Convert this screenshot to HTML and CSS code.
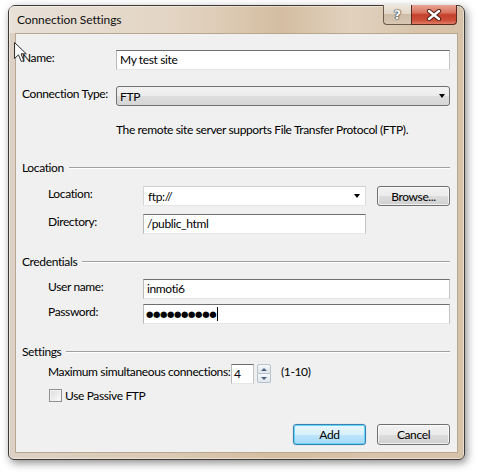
FILE: index.html
```html
<!DOCTYPE html>
<html>
<head>
<meta charset="utf-8">
<link rel="stylesheet" href="styles.css">
</head>
<body>
<div class="window">
  <div class="titlebar">
    <span class="title">Connection Settings</span>
    <div class="caption-btns">
      <div class="cap-help">?</div>
      <div class="cap-close">
        <svg width="16" height="12" viewBox="0 0 16 12"><path d="M3 2 L13 10 M13 2 L3 10" stroke="#4a1a12" stroke-width="4.2" stroke-linecap="round"/><path d="M3 2 L13 10 M13 2 L3 10" stroke="#ffffff" stroke-width="2.4" stroke-linecap="round"/></svg>
      </div>
    </div>
  </div>
  <div class="client">
    <div class="row top-row first">
      <span class="lbl lbl-top">Name:</span>
      <div class="textbox grow">My test site</div>
    </div>
    <div class="row top-row gap16">
      <span class="lbl lbl-top">Connection Type:</span>
      <div class="dropdown grow"><span>FTP</span><span class="arrow"></span></div>
    </div>
    <p class="desc">The remote site server supports File Transfer Protocol (FTP).</p>

    <div class="group-head g-loc"><span>Location</span><span class="rule"></span></div>
    <div class="row grp-row loc-row">
      <span class="lbl lbl-grp">Location:</span>
      <div class="combo"><span>ftp://</span><span class="arrow"></span></div>
      <div class="button browse">Browse...</div>
    </div>
    <div class="row grp-row dir-row">
      <span class="lbl lbl-grp">Directory:</span>
      <div class="textbox dir">/public_html</div>
    </div>

    <div class="group-head g-cred"><span>Credentials</span><span class="rule"></span></div>
    <div class="row grp-row user-row">
      <span class="lbl lbl-grp">User name:</span>
      <div class="textbox grow">inmoti6</div>
    </div>
    <div class="row grp-row pass-row">
      <span class="lbl lbl-grp">Password:</span>
      <div class="textbox grow pass"><span class="dots">●●●●●●●●●●</span><span class="caret"></span></div>
    </div>

    <div class="group-head g-set"><span>Settings</span><span class="rule"></span></div>
    <div class="row grp-row spin-row">
      <span class="lbl spin-lbl">Maximum simultaneous connections:</span>
      <div class="textbox spin-box">4</div>
      <div class="spin-btns">
        <div class="spin-up"><span class="tri-up"></span></div>
        <div class="spin-down"><span class="tri-down"></span></div>
      </div>
      <span class="range">(1-10)</span>
    </div>
    <div class="check-row">
      <span class="checkbox"></span>
      <span>Use Passive FTP</span>
    </div>

    <div class="actions">
      <div class="button default">Add</div>
      <div class="button">Cancel</div>
    </div>
  </div>
</div>
<svg class="pointer" width="14" height="22" viewBox="0 0 14 22">
  <path d="M0.5 0.5 L0.5 16.5 L4.5 12.8 L7.3 19.5 L9.8 18.5 L7 11.8 L12.3 11.8 Z" fill="rgba(255,255,255,0.85)" stroke="#303030" stroke-width="1" stroke-linejoin="round"/>
</svg>
</body>
</html>
```
FILE: styles.css
```css
* { box-sizing: border-box; }
html, body { margin: 0; padding: 0; background: #ffffff; }
body {
  width: 478px;
  height: 475px;
  overflow: hidden;
  position: relative;
  font-family: Lato, "Liberation Sans", sans-serif;
  font-size: 12px;
  letter-spacing: -0.37px;
  color: #000;
}
.window {
  margin: 5px 0 0 8px;
  width: 457px;
  height: 455px;
  border: 1px solid #3d3a36;
  border-radius: 7px 7px 6px 6px;
  padding: 0 6px 6px 6px;
  background: linear-gradient(90deg, #dcd1c4 0%, #dbc9b3 35%, #d4bda0 60%, #d8c4ab 80%, #d6c2a9 100%);
  box-shadow: 2px 3px 9px rgba(0,0,0,0.45), inset 0 0 0 1px rgba(255,255,255,0.45);
  display: flex;
  flex-direction: column;
}
.titlebar {
  height: 27px;
  display: flex;
  align-items: center;
  justify-content: space-between;
  background: linear-gradient(90deg, rgba(255,255,255,0.35) 0%, rgba(255,255,255,0.2) 40%, rgba(255,255,255,0) 60%, rgba(255,255,255,0.25) 75%, rgba(255,255,255,0) 90%);
  margin: 0 -6px;
  padding: 0 7px 0 8px;
}
.title { font-size: 12px; color: #111; letter-spacing: -0.1px; }
.caption-btns {
  align-self: flex-start;
  margin-top: -1px;
  display: flex;
  height: 20px;
}
.cap-help {
  width: 28px;
  height: 20px;
  border: 1px solid #6b5d4e;
  border-right: none;
  border-top: none;
  border-radius: 0 0 0 4px;
  background: linear-gradient(180deg, #efe8df 0%, #e2d7c9 45%, #cdbca6 50%, #d8c8b3 100%);
  color: #f8f8f8;
  font-family: "DejaVu Sans", sans-serif;
  font-weight: bold;
  font-size: 13px;
  letter-spacing: 0;
  line-height: 19px;
  text-align: center;
  text-shadow: 0 0 1px #333, 0 0 1px #333, 0 0 2px #555;
}
.cap-close {
  width: 46px;
  height: 20px;
  border: 1px solid #5a2a22;
  border-top: none;
  border-radius: 0 0 4px 0;
  background: linear-gradient(180deg, #e9a595 0%, #d9735f 40%, #c4402b 52%, #cc4f39 80%, #e07c66 100%);
  display: flex;
  align-items: center;
  justify-content: center;
}
.client {
  flex: 1;
  background: #f0f0f0;
  border: 1px solid #b7a790;
  padding: 16px 7px 0 6px;
  display: flex;
  flex-direction: column;
}
.row { display: flex; align-items: flex-start; height: 20px; }
.lbl { line-height: 15px; white-space: nowrap; }
.gap16 { margin-top: 16px; }
.lbl-top { width: 94px; flex: none; }
.lbl-grp { width: 95px; flex: none; }
.grp-row { padding-left: 26px; }
.grow { flex: 1; }
.textbox {
  height: 20px;
  background: #fff;
  border: 1px solid;
  border-color: #6e6e6e #c3c3c3 #e6e6e6 #b9b9b9;
  padding: 0 3px;
  line-height: 18px;
  white-space: nowrap;
}
.dropdown {
  height: 20px;
  border: 1px solid #707070;
  border-radius: 3px;
  background: linear-gradient(180deg, #f3f3f3 0%, #ebebeb 50%, #dddddd 51%, #d6d6d6 100%);
  padding: 0 4px 0 3px;
  display: flex;
  align-items: center;
  justify-content: space-between;
}
.arrow {
  width: 0; height: 0;
  border-left: 3.5px solid transparent;
  border-right: 3.5px solid transparent;
  border-top: 4px solid #000;
}
.desc {
  margin: 16px 0 0 94px;
  line-height: 15px;
}
.group-head {
  display: flex;
  align-items: center;
  height: 15px;
}
.group-head .rule {
  flex: 1;
  margin-left: 5px;
  height: 2px;
  border-top: 1px solid #a0a0a0;
  border-bottom: 1px solid #ffffff;
  margin-top: 1px;
}
.g-loc { margin-top: 23px; }
.g-cred { margin-top: 20px; }
.g-set { margin-top: 20px; }
.loc-row { margin-top: 11px; }
.combo {
  width: 223px;
  height: 20px;
  background: #fff;
  border: 1px solid;
  border-color: #cfcfcf #dcdcdc #e6e6e6 #d6d6d6;
  display: flex;
  align-items: center;
  justify-content: space-between;
  padding: 0 5px 0 4px;
}
.button {
  width: 73px;
  height: 21px;
  border: 1px solid #707070;
  border-radius: 3px;
  background: linear-gradient(180deg, #f2f2f2 0%, #ebebeb 50%, #dddddd 51%, #cfcfcf 100%);
  display: flex;
  align-items: center;
  justify-content: center;
  box-shadow: inset 0 0 0 1px rgba(255,255,255,0.7);
}
.browse { margin-left: 11px; height: 20px; }
.dir-row { margin-top: 8px; }
.dir { width: 223px; }
.user-row { margin-top: 10px; }
.pass-row { margin-top: 5px; }
.pass { display: flex; align-items: center; padding-left: 2px; }
.dots { font-family: "DejaVu Sans", sans-serif; font-size: 8.5px; letter-spacing: -0.4px; }
.caret { width: 1px; height: 14px; background: #000; margin-left: 1px; }
.g-set + .spin-row { margin-top: 5px; }
.spin-lbl { width: 183px; flex: none; }
.spin-box { width: 23px; padding-left: 2px; }
.spin-btns {
  margin-left: 3px;
  width: 14px;
  height: 19px;
  display: flex;
  flex-direction: column;
}
.spin-up, .spin-down {
  flex: 1;
  border: 1px solid #b9c3cc;
  background: linear-gradient(180deg, #f6f8fa 0%, #dfe5ea 100%);
  display: flex;
  align-items: center;
  justify-content: center;
}
.spin-up { border-radius: 2px 2px 0 0; }
.spin-down { border-top: none; border-radius: 0 0 2px 2px; }
.tri-up { width:0; height:0; border-left: 3px solid transparent; border-right: 3px solid transparent; border-bottom: 3px solid #4d6185; }
.tri-down { width:0; height:0; border-left: 3px solid transparent; border-right: 3px solid transparent; border-top: 3px solid #4d6185; }
.range { margin-left: 10px; line-height: 15px; }
.check-row {
  margin-top: 4px;
  padding-left: 27px;
  display: flex;
  align-items: center;
  height: 15px;
  gap: 3px;
}
.checkbox {
  width: 13px; height: 13px;
  border: 1px solid #8f8f8f;
  background: linear-gradient(135deg, #dcdcdc 0%, #f2f2f2 70%, #fbfbfb 100%);
  box-shadow: inset 0 0 0 1px #f4f4f4;
}
.actions {
  margin-top: 21px;
  display: flex;
  justify-content: flex-end;
  gap: 11px;
}
.actions .button { width: 73px; height: 21px; }
.button.default {
  border-color: #3c7fb1;
  background: linear-gradient(180deg, #eaf6fd 0%, #d9f0fc 50%, #bee6fd 51%, #a7d9f5 100%);
  box-shadow: inset 0 0 0 1px #5fd6f8, 0 0 1px rgba(60,127,177,0.6);
}
.pointer {
  position: absolute;
  left: 14px;
  top: 42px;
}
```
